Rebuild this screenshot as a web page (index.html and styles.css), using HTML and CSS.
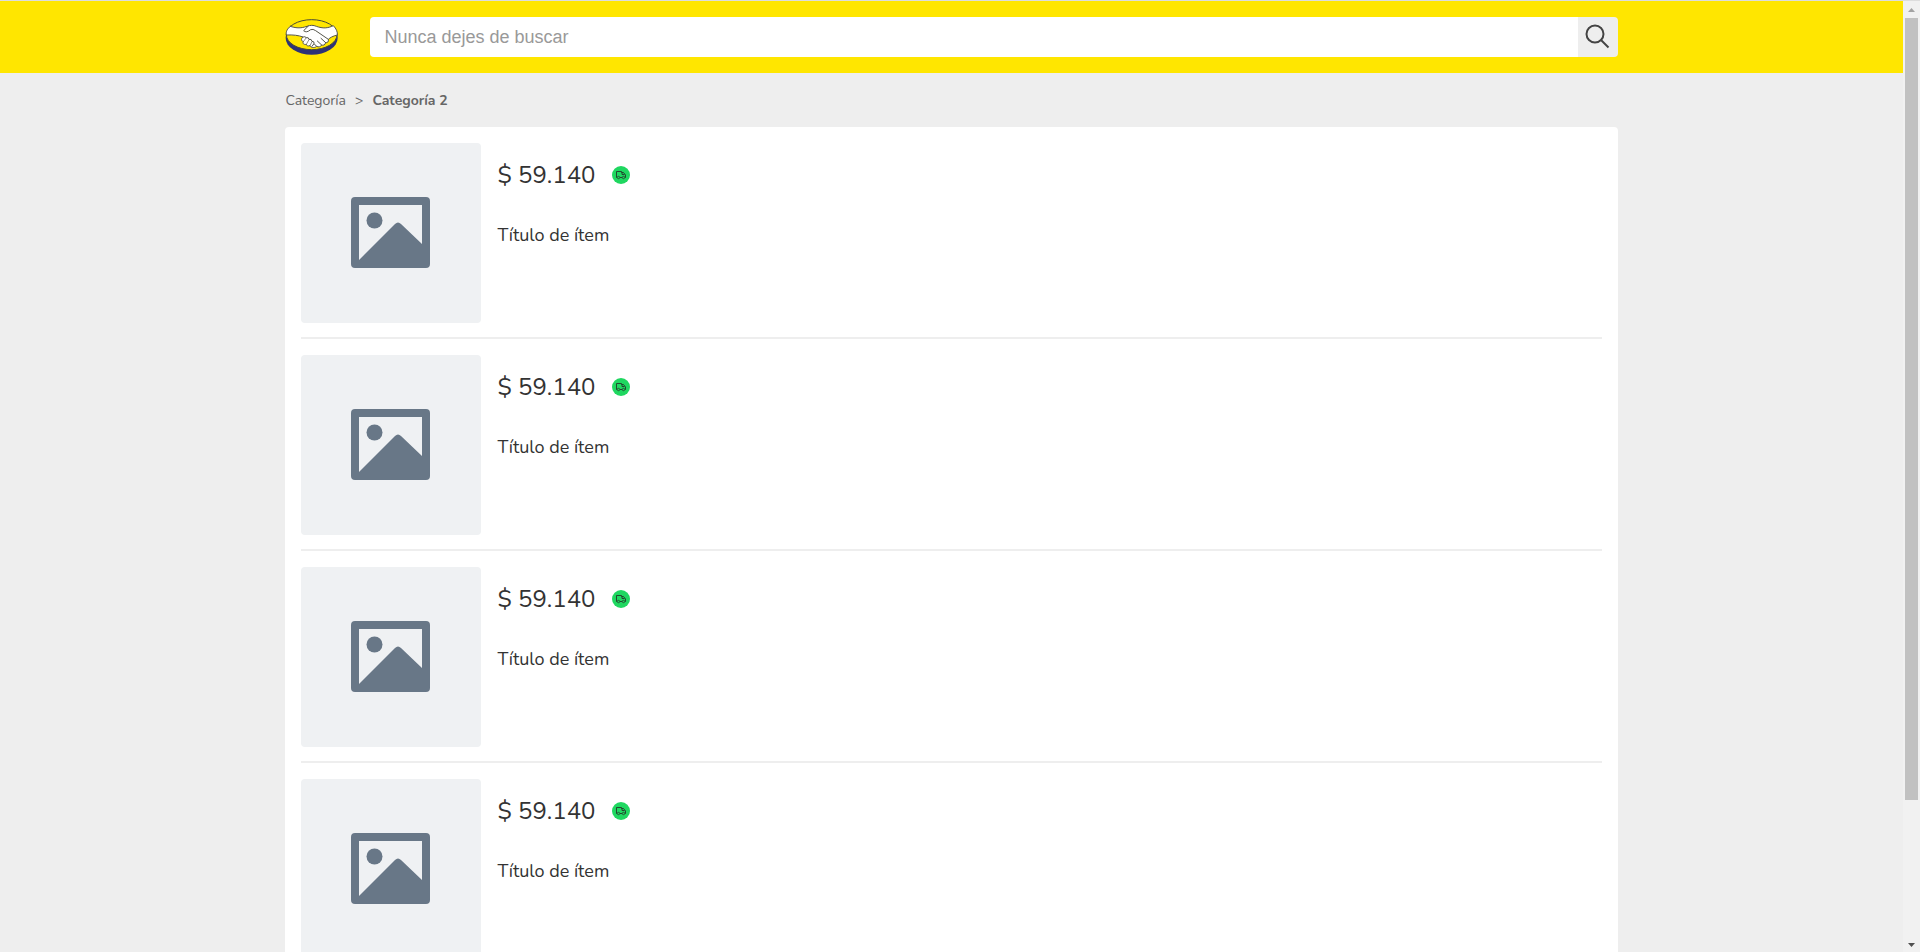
FILE: index.html
```
<!DOCTYPE html>
<html lang="es">
<head>
<meta charset="utf-8">
<title>Resultados de búsqueda</title>
<link rel="stylesheet" href="styles.css">
</head>
<body>
<svg class="sprite" aria-hidden="true">
  <symbol id="picture" viewBox="0 0 80 72">
    <path fill-rule="evenodd" d="M4 0H75Q79 0 79 4V67Q79 71 75 71H4Q0 71 0 67V4Q0 0 4 0ZM8 8V63L44 27Q47 24 50 27L71 47V8Z"/>
    <circle cx="23.500" cy="23.500" r="8"/>
  </symbol>
  <symbol id="shipping" viewBox="0 0 18 18">
    <circle cx="9" cy="9" r="9" fill="#1fd760"/>
    <path d="M5 11.500H4.500V5.500H9.500V6.500H11.500L13.500 9V11.500H13M10 6.500V8.500H12.500M8 11.500H10" fill="none" stroke="#24382b" stroke-width=".9"/>
    <circle cx="6.500" cy="11.500" r="1.200" fill="none" stroke="#24382b" stroke-width=".8"/>
    <circle cx="11.500" cy="11.500" r="1.200" fill="none" stroke="#24382b" stroke-width=".8"/>
  </symbol>
</svg>
<div class="viewport">
  <div class="page">
    <header class="header">
      <div class="container header-row">
        <a class="logo" href="#" aria-label="Inicio">
          <svg viewBox="30 33 159 108" width="53" height="36" aria-hidden="true">
            <ellipse cx="110" cy="90" rx="78" ry="50" fill="#2d3277"/>
            <ellipse cx="110" cy="80" rx="76" ry="45" fill="#ffe600" stroke="#4a4a35" stroke-width="3"/>
            <g fill="#fff" stroke="#55554a" stroke-width="3" stroke-linejoin="round" stroke-linecap="round">
              <path d="M46 55C61 60 76 62 96 55C106 51 115 51 124 55C144 62 158 61 175 53C184 62 188 72 187 81C174 84 165 89 160 94C162 101 157 105 152 104C150 111 145 113 140 111C137 117 130 118 125 115C118 121 107 119 105 113C99 115 94 113 94 109C86 111 82 105 85 101C77 98 79 90 84 87C71 82 54 80 34 81C32 71 37 62 46 55Z"/>
              <path d="M100 54L86 68Q94 76 107 65Q114 62 122 68L160 94" fill="none"/>
              <path d="M152 104L138 91M140 111L127 99M125 115L118 108" fill="none"/>
              <path d="M84 87Q90 84 94 89Q101 87 102 94Q110 92 111 100Q119 100 117 107L111 115" fill="none"/>
              <path d="M85 101L94 89M94 109L102 95M105 113L111 101" fill="none" stroke-width="2"/>
            </g>
          </svg>
        </a>
        <form class="search" role="search">
          <input class="search-input" type="text" placeholder="Nunca dejes de buscar" aria-label="Buscar">
          <button class="search-button" type="button" aria-label="Buscar">
            <svg viewBox="0 0 26 26" width="26" height="26" fill="none" stroke="#444" stroke-width="2" aria-hidden="true">
              <circle cx="10" cy="10" r="8.500"/><path d="M16 16L23.500 23.500"/>
            </svg>
          </button>
        </form>
      </div>
    </header>
    <main class="container">
      <nav class="breadcrumb" aria-label="Categorías">
        <a href="#">Categoría</a><span>&gt;</span><strong>Categoría 2</strong>
      </nav>
      <ul class="results">
        <li class="item">
          <div class="thumb"><svg class="picture"><use href="#picture"/></svg></div>
          <div class="info"><p class="price">$ 59.140 <svg class="shipping"><use href="#shipping"/></svg></p><h2 class="title">Título de ítem</h2></div>
        </li>
        <li class="item">
          <div class="thumb"><svg class="picture"><use href="#picture"/></svg></div>
          <div class="info"><p class="price">$ 59.140 <svg class="shipping"><use href="#shipping"/></svg></p><h2 class="title">Título de ítem</h2></div>
        </li>
        <li class="item">
          <div class="thumb"><svg class="picture"><use href="#picture"/></svg></div>
          <div class="info"><p class="price">$ 59.140 <svg class="shipping"><use href="#shipping"/></svg></p><h2 class="title">Título de ítem</h2></div>
        </li>
        <li class="item">
          <div class="thumb"><svg class="picture"><use href="#picture"/></svg></div>
          <div class="info"><p class="price">$ 59.140 <svg class="shipping"><use href="#shipping"/></svg></p><h2 class="title">Título de ítem</h2></div>
        </li>
      </ul>
    </main>
  </div>
  <div class="scrollbar" aria-hidden="true">
    <svg viewBox="0 0 17 17" width="17" height="17"><path d="M5 11L8.500 7L12 11Z" fill="#a3a3a3"/></svg>
    <div class="track"><div class="scroll-thumb"></div><div class="scroll-rest"></div></div>
    <svg viewBox="0 0 17 17" width="17" height="17"><path d="M5 8L8.500 12L12 8Z" fill="#505050"/></svg>
  </div>
</div>
</body>
</html>
```
FILE: styles.css
```
* { box-sizing: border-box; }

body {
  margin: 0;
  background: #eee;
  color: #333;
  font-family: Nunito, Lato, sans-serif;
}

.sprite { display: none; }

.viewport {
  display: flex;
  height: 100vh;
  overflow: hidden;
  border-top: 1px solid #ddd;
}

.page { flex: 1; overflow: hidden; }

.container { width: 70%; margin: 0 auto; }

.header { background: #ffe600; padding: 16px 0; }

.header-row { display: flex; align-items: center; gap: 32px; }

.logo { display: flex; }

.search {
  display: flex;
  flex: 1;
  height: 40px;
  border-radius: 4px;
  overflow: hidden;
}

.search-input {
  flex: 1;
  min-width: 0;
  padding: 0 14px;
  border: 0;
  background: #fff;
  color: #333;
  font: 18px "Liberation Sans", Arial, sans-serif;
}

.search-input::placeholder { color: #999; opacity: 1; }

.search-button {
  display: flex;
  align-items: center;
  justify-content: center;
  width: 40px;
  padding: 0;
  border: 0;
  background: #eee;
}

.breadcrumb {
  display: flex;
  gap: 9px;
  padding: 18px 0 16px;
  color: #666;
  font-size: 14px;
  line-height: 20px;
}

.breadcrumb a { color: inherit; text-decoration: none; }

.results {
  margin: 0;
  padding: 0 16px;
  border-radius: 4px;
  background: #fff;
  list-style: none;
}

.item {
  display: flex;
  gap: 16px;
  padding: 16px 0 14px;
  border-bottom: 2px solid #eee;
}

.thumb {
  display: flex;
  align-items: center;
  justify-content: center;
  width: 180px;
  height: 180px;
  border-radius: 4px;
  background: #eff1f3;
}

.picture { width: 80px; height: 72px; fill: #687787; }

.info { padding-top: 16px; }

.price {
  display: flex;
  align-items: center;
  gap: 16px;
  margin: 0 0 32px;
  font-size: 24px;
  line-height: 32px;
}

.shipping { width: 18px; height: 18px; }

.title {
  margin: 0;
  font-size: 18px;
  font-weight: 400;
  line-height: 24px;
}

.scrollbar {
  display: flex;
  flex-direction: column;
  width: 17px;
  background: #f1f1f1;
}

.track {
  display: flex;
  flex: 1;
  flex-direction: column;
  padding: 0 2px;
}

.scroll-thumb { flex: 58; background: #c1c1c1; }

.scroll-rest { flex: 10; }
```
